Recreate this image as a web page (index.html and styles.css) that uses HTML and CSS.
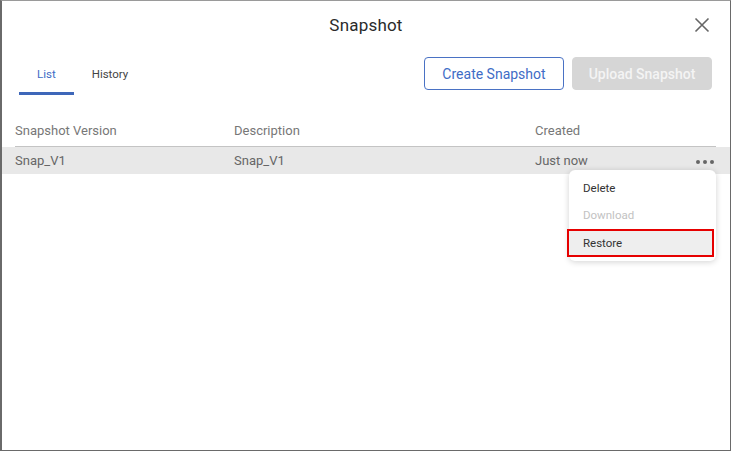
FILE: index.html
```html
<!DOCTYPE html>
<html>
<head>
<meta charset="utf-8">
<link rel="stylesheet" href="styles.css">
</head>
<body>
<div class="dialog">
  <div class="header">
    <span></span>
    <h1 class="title">Snapshot</h1>
    <button class="close" aria-label="Close">
      <svg width="16" height="16" viewBox="0 0 16 16"><path d="M1.5 1.5 L14.5 14.5 M14.5 1.5 L1.5 14.5" stroke="#666" stroke-width="1.6" fill="none"/></svg>
    </button>
  </div>
  <div class="toolbar">
    <div class="tabs">
      <div class="tab active">List</div>
      <div class="tab">History</div>
    </div>
    <div class="actions">
      <button class="btn btn-outline">Create Snapshot</button>
      <button class="btn btn-disabled">Upload Snapshot</button>
    </div>
  </div>
  <div class="table">
    <div class="thead">
      <div class="c1">Snapshot Version</div>
      <div class="c2">Description</div>
      <div class="c3">Created</div>
    </div>
    <div class="trow">
      <div class="c1">Snap_V1</div>
      <div class="c2">Snap_V1</div>
      <div class="c3">Just now</div>
      <div class="more"><i></i><i></i><i></i></div>
    </div>
  </div>
  <div class="menu">
    <div class="item">Delete</div>
    <div class="item disabled">Download</div>
    <div class="item selected">Restore</div>
  </div>
</div>
</body>
</html>
```
FILE: styles.css
```css
html, body {
  margin: 0;
  padding: 0;
  background: #fff;
}
body {
  font-family: Roboto, "Liberation Sans", sans-serif;
}
.dialog {
  position: relative;
  width: 731px;
  height: 451px;
  box-sizing: border-box;
  border: 1px solid #6a6a6a;
  border-left-width: 2px;
  border-top-color: #9a9a9a;
  background: #fff;
  overflow: hidden;
}
.header {
  display: grid;
  grid-template-columns: 1fr auto 1fr;
  align-items: center;
  height: 47px;
}
.title {
  margin: 0;
  font-size: 17px;
  font-weight: 400;
  color: #2a2a2a;
  letter-spacing: 0.2px;
}
.close {
  justify-self: end;
  margin-right: 20px;
  border: 0;
  background: none;
  padding: 0;
  width: 16px;
  height: 16px;
  display: flex;
}
.toolbar {
  display: flex;
  justify-content: space-between;
  align-items: flex-start;
  padding: 0 18px 0 17px;
}
.tabs {
  display: flex;
}
.tab {
  padding: 16px 18px 8px;
  line-height: 20px;
  font-size: 11.5px;
  color: #444;
  border-bottom: 3px solid transparent;
}
.tab.active {
  color: #3e6cc6;
  border-bottom-color: #3e67b9;
}
.actions {
  display: flex;
  gap: 8px;
  margin-top: 9px;
}
.btn {
  width: 140px;
  height: 33px;
  border-radius: 4px;
  font-family: Roboto, "Liberation Sans", sans-serif;
  font-size: 14px;
  padding: 0;
}
.btn-outline {
  background: #fff;
  border: 1px solid #4a72c4;
  color: #3e6cc6;
}
.btn-disabled {
  background: #d6d6d6;
  border: 1px solid #d6d6d6;
  color: #f4f4f4;
  font-weight: 500;
}
.table {
  margin-top: 20px;
}
.thead, .trow {
  display: flex;
  align-items: center;
  font-size: 13px;
}
.thead {
  height: 31px;
  margin: 0 14px 0 13px;
  border-bottom: 1px solid #c4c4c4;
  color: #777;
}
.trow {
  height: 27px;
  padding-left: 13px;
  background: #e8e8e8;
  color: #666;
}
.c1 { width: 219px; }
.c2 { width: 301px; }
.c3 { flex: 1; }
.more {
  display: flex;
  gap: 3px;
  margin-right: 16px;
  margin-top: 2px;
}
.more i {
  display: block;
  width: 4px;
  height: 4px;
  border-radius: 50%;
  background: #666;
}
.menu {
  position: absolute;
  left: 567px;
  top: 169px;
  width: 147px;
  height: 91px;
  box-sizing: border-box;
  padding-top: 5px;
  background: #fff;
  border-radius: 6px;
  box-shadow: 0 1px 6px rgba(0,0,0,0.18);
}
.item {
  height: 27px;
  line-height: 27px;
  padding-left: 14px;
  font-size: 11.5px;
  color: #333;
}
.item.disabled {
  color: #c2c2c2;
}
.item.selected {
  margin: 0 2px 0 -2px;
  height: 24px;
  line-height: 24px;
  border: 2px solid #e60000;
  background: #eeeeee;
}
```
